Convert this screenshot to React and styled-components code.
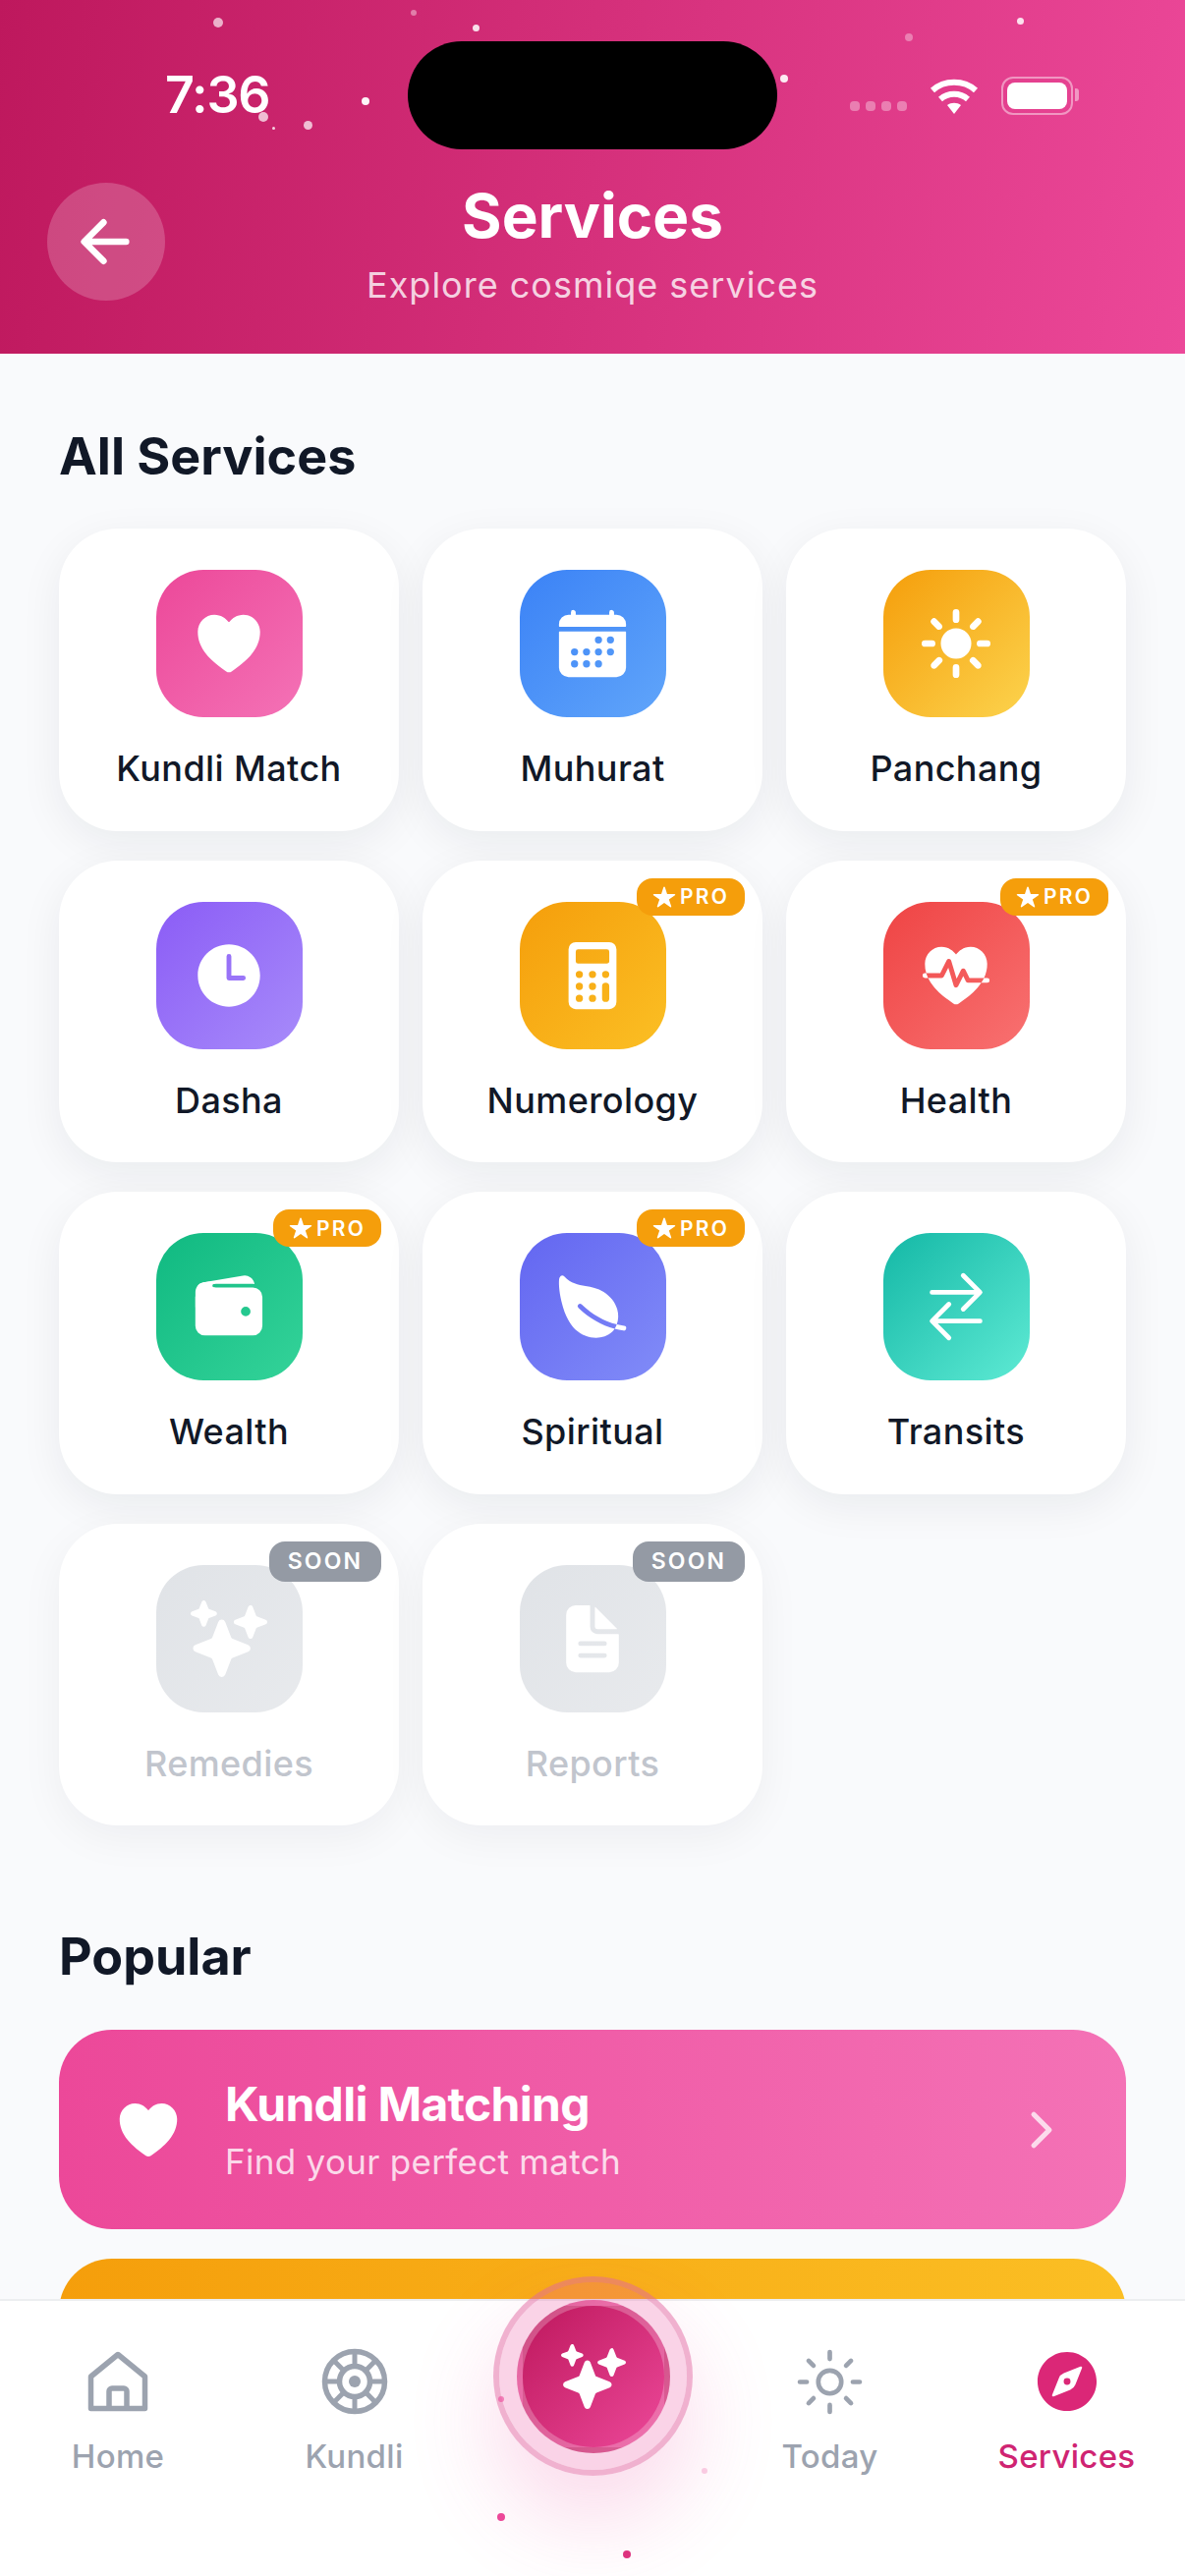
import React from 'react';
import styled, { createGlobalStyle } from 'styled-components';
import {
  IoArrowBack, IoHeart, IoCalendar, IoSunny, IoTime, IoCalculator, IoFitness, IoWallet, IoLeaf,
  IoSwapHorizontal, IoSparkles, IoDocumentText, IoChevronForward, IoSunnyOutline, IoCompass, IoStar,
} from 'react-icons/io5';

const Global = createGlobalStyle`
  html, body { margin: 0; padding: 0; background: #fff; }
  * { box-sizing: border-box; }
  body { font-family: Inter, "Noto Sans", "Liberation Sans", sans-serif; }
`;

const Screen = styled.div`
  position: relative;
  width: 1206px;
  height: 2622px;
  overflow: hidden;
  display: flex;
  flex-direction: column;
  background: #f9fafc;
`;

const Header = styled.header`
  height: 360px;
  flex: none;
  padding-top: 42px;
  background: linear-gradient(100deg, #be185d 0%, #ec4899 100%);
  color: #fff;
`;

const StatusBar = styled.div`
  display: grid;
  grid-template-columns: 415px 376px 1fr;
  height: 110px;
  align-items: center;
`;

const Time = styled.div`
  padding-left: 168px;
  font-size: 52px;
  font-weight: 600;
  letter-spacing: -1.2px;
  line-height: 1;
`;

const Island = styled.div`
  height: 110px;
  border-radius: 55px;
  background: #000;
`;

const StatusRight = styled.div`
  display: flex;
  align-items: center;
  padding-left: 74px;
`;

const SignalDots = styled.div`
  display: flex;
  gap: 6px;
  margin: 22px 23px 0 0;
`;

const SignalDot = styled.span`
  width: 10px;
  height: 10px;
  border-radius: 4px;
  background: rgba(255, 255, 255, 0.35);
`;

const Battery = styled.div`
  position: relative;
  width: 73px;
  height: 39px;
  margin-left: 23px;
  padding: 4px;
  border: 2px solid rgba(255, 255, 255, 0.45);
  border-radius: 12px;
  &::after {
    content: '';
    position: absolute;
    right: -8px;
    top: 10px;
    width: 4px;
    height: 13px;
    border-radius: 0 3px 3px 0;
    background: rgba(255, 255, 255, 0.45);
  }
`;

const BatteryFill = styled.div`
  width: 100%;
  height: 100%;
  border-radius: 8px;
  background: #fff;
`;

const HeaderRow = styled.div`
  display: grid;
  grid-template-columns: 120px 1fr 120px;
  padding: 0 48px;
  margin-top: 32px;
`;

const BackButton = styled.button`
  width: 120px;
  height: 120px;
  margin-top: 2px;
  padding: 0 2px 0 0;
  border: 0;
  border-radius: 50%;
  display: flex;
  align-items: center;
  justify-content: center;
  color: #fff;
  background: rgba(255, 255, 255, 0.2);
`;

const HeaderText = styled.div`
  display: flex;
  flex-direction: column;
  align-items: center;
`;

const Title = styled.h1`
  margin: 0;
  font-size: 62px;
  line-height: 72px;
  font-weight: 700;
`;

const Subtitle = styled.p`
  margin: 11px 0 0;
  font-size: 36px;
  line-height: 46px;
  letter-spacing: 1px;
  color: rgba(255, 255, 255, 0.8);
`;

const Main = styled.main`
  flex: 1;
  min-height: 0;
  overflow: hidden;
  padding: 73px 60px 0;
`;

const SectionTitle = styled.h2`
  margin: ${p => p.$top || 0}px 0 ${p => p.$bottom}px;
  font-size: 52px;
  line-height: 64px;
  font-weight: 700;
  color: #111827;
`;

const Grid = styled.div`
  display: grid;
  grid-template-columns: repeat(3, 1fr);
  gap: 30px 24px;
`;

const Card = styled.div`
  position: relative;
  height: 307.5px;
  padding-top: 42px;
  display: flex;
  flex-direction: column;
  align-items: center;
  border-radius: 60px;
  background: #fff;
  box-shadow: 0 12px 44px rgba(17, 24, 39, ${p => (p.$disabled ? 0.05 : 0.065)});
`;

const Tile = styled.div`
  width: 149px;
  height: 150px;
  border-radius: 48px;
  display: flex;
  align-items: center;
  justify-content: center;
  color: #fff;
  background: linear-gradient(135deg, ${p => p.$from}, ${p => p.$to});
`;

const Label = styled.div`
  margin-top: 30px;
  font-size: 36px;
  line-height: 44px;
  font-weight: 500;
  letter-spacing: 0.4px;
  color: ${p => (p.$disabled ? '#c1c5cd' : '#111827')};
`;

const Badge = styled.div`
  position: absolute;
  top: 18px;
  right: 18px;
  display: flex;
  align-items: center;
  justify-content: center;
  gap: 4px;
  height: ${p => (p.$soon ? 41 : 38)}px;
  width: ${p => (p.$soon ? 114 : 110)}px;
  border-radius: 16px;
  color: #fff;
  font-size: ${p => (p.$soon ? 23 : 21)}px;
  font-weight: 600;
  letter-spacing: 2.2px;
  background: ${p => (p.$soon ? '#949aa4' : '#f59e0b')};
`;

const Popular = styled.div`
  display: flex;
  flex-direction: column;
  gap: 30px;
`;

const PopularCard = styled.div`
  flex: none;
  height: 203px;
  border-radius: 54px;
  padding: 0 58px 0 55px;
  display: flex;
  align-items: center;
  color: #fff;
  background: linear-gradient(90deg, ${p => p.$from}, ${p => p.$to});
`;

const PopularText = styled.div`
  flex: 1;
  margin-left: 42px;
`;

const PopularTitle = styled.div`
  font-size: 48px;
  line-height: 58px;
  font-weight: 700;
  letter-spacing: -0.7px;
`;

const PopularSub = styled.div`
  margin-top: 6px;
  font-size: 35px;
  line-height: 46px;
  letter-spacing: 0.3px;
  color: rgba(255, 255, 255, 0.8);
`;

const Chevron = styled.div`
  display: flex;
  color: rgba(255, 255, 255, 0.75);
`;

const Nav = styled.nav`
  position: relative;
  flex: none;
  height: 282px;
  display: grid;
  grid-template-columns: 240px 241px 243px 241px 241px;
  background: #fff;
  border-top: 2px solid #eceef0;
`;

const NavItem = styled.div`
  display: flex;
  flex-direction: column;
  align-items: center;
  color: ${p => (p.$active ? '#db2777' : '#9ca3af')};
`;

const NavIcon = styled.div`
  height: 84px;
  width: 84px;
  margin-top: 40px;
  display: flex;
  align-items: center;
  justify-content: center;
`;

const NavLabel = styled.div`
  margin-top: 12px;
  font-size: 33px;
  line-height: 44px;
  font-weight: 450;
  letter-spacing: 0.3px;
  color: ${p => (p.$active ? '#cf2472' : '#9ca3af')};
`;

const FabOuter = styled.div`
  position: absolute;
  left: 502px;
  top: -25px;
  width: 203px;
  height: 203px;
  border-radius: 50%;
  display: flex;
  align-items: center;
  justify-content: center;
  border: 6px solid rgba(226, 100, 160, 0.5);
  background: rgba(236, 72, 153, 0.24);
  background-clip: padding-box;
  box-shadow: 0 46px 90px rgba(236, 72, 153, 0.2);
`;

const FabInner = styled.div`
  width: 156px;
  height: 156px;
  border-radius: 50%;
  display: flex;
  align-items: center;
  justify-content: center;
  color: #fff;
  border: 6px solid rgba(255, 255, 255, 0.24);
  background: linear-gradient(135deg, #be185d, #ec4899);
`;

const Dot = styled.i`
  position: absolute;
  left: ${p => p.$x - p.$r}px;
  top: ${p => p.$y - p.$r}px;
  width: ${p => p.$r * 2}px;
  height: ${p => p.$r * 2}px;
  border-radius: 50%;
  background: ${p => p.$c};
  opacity: ${p => p.$o};
`;

const HomeGlyph = () => (
  <svg width="72" height="72" viewBox="0 0 72 72" fill="none" stroke="currentColor" strokeWidth="5.5" strokeLinejoin="round">
    <path d="M36 8.5 L8.5 31 V63.5 H63.5 V31 Z" />
    <path d="M27 63.5 V46 a3 3 0 0 1 3-3 h12 a3 3 0 0 1 3 3 V63.5" />
  </svg>
);

const KundliWheel = () => (
  <svg width="72" height="72" viewBox="0 0 72 72" fill="none" stroke="currentColor">
    <circle cx="36" cy="36" r="30.5" strokeWidth="5.5" />
    <circle cx="36" cy="36" r="15.5" strokeWidth="5.5" />
    <circle cx="36" cy="36" r="6" fill="currentColor" stroke="none" />
    {[0, 45, 90, 135, 180, 225, 270, 315].map(a => (
      <line key={a} x1="36" y1="20" x2="36" y2="6" strokeWidth="5" transform={`rotate(${a} 36 36)`} />
    ))}
  </svg>
);

const WifiGlyph = () => (
  <svg width="50" height="37" viewBox="0 0 50 37" fill="none" stroke="#fff" strokeWidth="6">
    <path d="M3 13 C15 2 35 2 47 13" />
    <path d="M11 22 C19 15 31 15 39 22" />
    <path d="M18 28 L25 37 L32 28 C28 25 22 25 18 28 Z" fill="#fff" stroke="none" />
  </svg>
);

const services = [
  { name: 'Kundli Match', Icon: IoHeart, from: '#ec4899', to: '#f472b6' },
  { name: 'Muhurat', Icon: IoCalendar, from: '#3b82f6', to: '#60a5fa' },
  { name: 'Panchang', Icon: IoSunny, from: '#f59e0b', to: '#fcd34d' },
  { name: 'Dasha', Icon: IoTime, from: '#8b5cf6', to: '#a78bfa' },
  { name: 'Numerology', Icon: IoCalculator, from: '#f59e0b', to: '#fbbf24', badge: 'PRO' },
  { name: 'Health', Icon: IoFitness, from: '#ef4444', to: '#f87171', badge: 'PRO' },
  { name: 'Wealth', Icon: IoWallet, from: '#10b981', to: '#34d399', badge: 'PRO' },
  { name: 'Spiritual', Icon: IoLeaf, from: '#6366f1', to: '#818cf8', badge: 'PRO' },
  { name: 'Transits', Icon: IoSwapHorizontal, from: '#14b8a6', to: '#5eead4' },
  { name: 'Remedies', Icon: IoSparkles, from: '#e0e3e7', to: '#e8eaed', badge: 'SOON', disabled: true },
  { name: 'Reports', Icon: IoDocumentText, from: '#e0e3e7', to: '#e8eaed', badge: 'SOON', disabled: true },
];

const dots = [
  [222, 23, 5, '#fff', 0.65], [421, 13, 3, '#fff', 0.4], [484, 28, 3.5, '#fff', 0.85],
  [1038, 21, 3.5, '#fff', 0.85], [925, 38, 4, '#fff', 0.35], [798, 80, 4, '#fff', 0.9],
  [372, 103, 4, '#fff', 0.95], [268, 119, 5, '#fff', 0.7], [278, 130, 1.5, '#fff', 0.8],
  [313, 127, 4.5, '#fff', 0.7],
  [510, 2442, 3, '#ec4899', 0.6], [717, 2515, 3, '#ec4899', 0.25],
  [510, 2562, 4, '#ec4899', 1], [638, 2600, 4, '#db2777', 0.95],
];

export default function App() {
  return (
    <Screen>
      <Global />
      <Header>
        <StatusBar>
          <Time>7:36</Time>
          <Island />
          <StatusRight>
            <SignalDots>
              {[0, 1, 2, 3].map(i => <SignalDot key={i} />)}
            </SignalDots>
            <WifiGlyph />
            <Battery><BatteryFill /></Battery>
          </StatusRight>
        </StatusBar>
        <HeaderRow>
          <BackButton aria-label="Back"><IoArrowBack size={70} /></BackButton>
          <HeaderText>
            <Title>Services</Title>
            <Subtitle>Explore cosmiqe services</Subtitle>
          </HeaderText>
        </HeaderRow>
      </Header>
      <Main>
        <SectionTitle $bottom={41}>All Services</SectionTitle>
        <Grid>
          {services.map(({ name, Icon, from, to, badge, disabled }) => (
            <Card key={name} $disabled={disabled}>
              <Tile $from={from} $to={to}><Icon size={78} /></Tile>
              <Label $disabled={disabled}>{name}</Label>
              {badge && (
                <Badge $soon={badge === 'SOON'}>
                  {badge === 'PRO' && <IoStar size={24} />}
                  {badge}
                </Badge>
              )}
            </Card>
          ))}
        </Grid>
        <SectionTitle $top={102} $bottom={42}>Popular</SectionTitle>
        <Popular>
          <PopularCard $from="#ec4899" $to="#f472b6">
            <IoHeart size={72} />
            <PopularText>
              <PopularTitle>Kundli Matching</PopularTitle>
              <PopularSub>Find your perfect match</PopularSub>
            </PopularText>
            <Chevron><IoChevronForward size={56} /></Chevron>
          </PopularCard>
          <PopularCard $from="#f59e0b" $to="#fbbf24" />
        </Popular>
      </Main>
      <Nav>
        <NavItem><NavIcon><HomeGlyph /></NavIcon><NavLabel>Home</NavLabel></NavItem>
        <NavItem><NavIcon><KundliWheel /></NavIcon><NavLabel>Kundli</NavLabel></NavItem>
        <div />
        <NavItem><NavIcon><IoSunnyOutline size={75} /></NavIcon><NavLabel>Today</NavLabel></NavItem>
        <NavItem $active><NavIcon><IoCompass size={74} /></NavIcon><NavLabel $active>Services</NavLabel></NavItem>
        <FabOuter>
          <FabInner><IoSparkles size={66} /></FabInner>
        </FabOuter>
      </Nav>
      {dots.map(([x, y, r, c, o]) => (
        <Dot key={`${x}-${y}`} $x={x} $y={y} $r={r} $c={c} $o={o} />
      ))}
    </Screen>
  );
}
